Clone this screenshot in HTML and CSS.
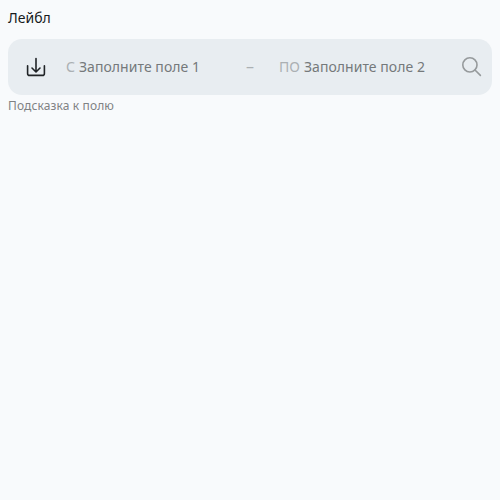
FILE: index.html
```html
<!DOCTYPE html>
<html lang="ru">
<head>
<meta charset="utf-8">
<title>Range</title>
<link rel="stylesheet" href="styles.css">
</head>
<body>
<div class="range">
  <label class="label">Лейбл</label>
  <div class="control">
    <svg class="icon download" viewBox="0 0 24 24"><path d="M12 3.6v13.2M8 13l4 4 4-4M3.6 10.8v7.6a2 2 0 0 0 2 2h12.8a2 2 0 0 0 2-2v-7.6"/></svg>
    <div class="field first"><span class="prefix">С</span><span class="placeholder">Заполните поле 1</span></div>
    <span class="divider">–</span>
    <div class="field second"><span class="prefix">ПО</span><span class="placeholder">Заполните поле 2</span></div>
    <svg class="icon search" viewBox="0 0 24 24"><circle cx="9.9" cy="9.9" r="7.1"/><path d="M15 15l5.4 5.4"/></svg>
  </div>
  <div class="hint">Подсказка к полю</div>
</div>
</body>
</html>
```
FILE: styles.css
```css
body {
  margin: 8px;
  background: #f8fafc;
  font-family: "Noto Sans", "Open Sans", sans-serif;
  color: #171b1d;
}
.label {
  display: block;
  height: 19px;
  margin-bottom: 12px;
  font-size: 14px;
  line-height: 19px;
}
.control {
  display: flex;
  align-items: center;
  box-sizing: border-box;
  height: 56px;
  padding: 0 8px 0 16px;
  border-radius: 14px;
  background: #e8edf1;
  font-size: 14px;
  line-height: 20px;
  white-space: nowrap;
}
.icon {
  flex: none;
  width: 24px;
  height: 24px;
  fill: none;
  stroke: #202427;
  stroke-width: 1.6;
  stroke-linecap: round;
  stroke-linejoin: round;
}
.search { stroke: #969a9c; }
.field {
  display: flex;
  gap: 4px;
}
.first { width: 180px; margin-left: 18px; }
.second { width: 181px; margin-left: 25px; }
.prefix { color: #abb0b3; }
.divider {
  width: 8px;
  padding-bottom: 2px;
  color: #abb0b3;
  font-size: 16px;
}
.placeholder {
  color: #75797b;
  letter-spacing: 0.05px;
}
.hint {
  margin-top: 3px;
  color: #808284;
  font-size: 12px;
  line-height: 16px;
  letter-spacing: 0.12px;
}
```
